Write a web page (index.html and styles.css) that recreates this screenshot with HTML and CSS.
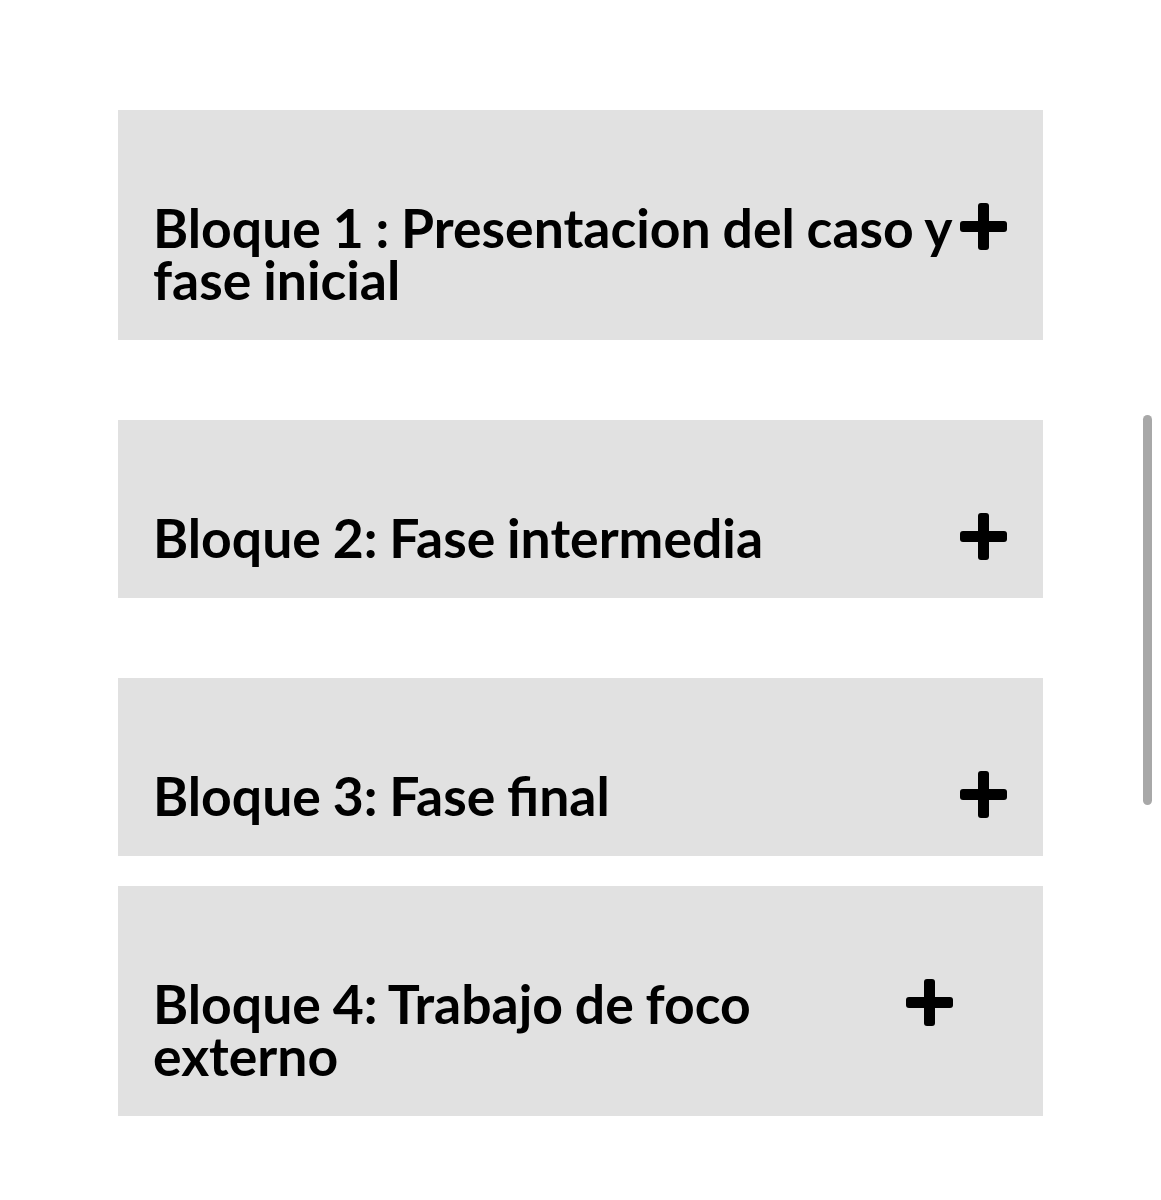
FILE: index.html
```html
<!DOCTYPE html>
<html lang="es">
<head>
    <meta charset="UTF-8">
    <meta name="viewport" content="width=device-width, initial-scale=1.0">
    <title>Bloques</title>
    <link rel="stylesheet" href="styles.css">
</head>
<body>
    <div class="accordion">
        <div class="block">
            <div class="block-head">
                <h2 class="block-title">Bloque 1 : Presentacion del caso y fase inicial</h2>
                <svg class="plus" viewBox="0 0 47 47"><rect x="0" y="18" width="47" height="11" rx="3"/><rect x="18" y="0" width="11" height="47" rx="3"/></svg>
            </div>
        </div>
        <div class="block">
            <div class="block-head">
                <h2 class="block-title">Bloque 2: Fase intermedia</h2>
                <svg class="plus" viewBox="0 0 47 47"><rect x="0" y="18" width="47" height="11" rx="3"/><rect x="18" y="0" width="11" height="47" rx="3"/></svg>
            </div>
        </div>
        <div class="block block-close">
            <div class="block-head">
                <h2 class="block-title">Bloque 3: Fase final</h2>
                <svg class="plus" viewBox="0 0 47 47"><rect x="0" y="18" width="47" height="11" rx="3"/><rect x="18" y="0" width="11" height="47" rx="3"/></svg>
            </div>
        </div>
        <div class="block">
            <div class="block-head block-head-narrow">
                <h2 class="block-title">Bloque 4: Trabajo de foco externo</h2>
                <svg class="plus" viewBox="0 0 47 47"><rect x="0" y="18" width="47" height="11" rx="3"/><rect x="18" y="0" width="11" height="47" rx="3"/></svg>
            </div>
        </div>
    </div>
    <div class="scrollbar"></div>
</body>
</html>
```

FILE: styles.css
```css
body {
    margin: 0;
    background: #fff;
    font-family: Lato, "Noto Sans", sans-serif;
    color: #000;
}
.accordion {
    width: 925px;
    margin-left: 118px;
    padding-top: 110px;
}
.block {
    background-color: #e1e1e1;
    margin-bottom: 80px;
}
.block-close {
    margin-bottom: 30px;
}
.block-head {
    display: flex;
    align-items: flex-start;
    padding: 91px 36px 35px 35px;
}
.block-head-narrow {
    padding-right: 90px;
}
.block-title {
    flex: 1;
    margin: 0;
    font-size: 53.5px;
    font-weight: 700;
    line-height: 52px;
    word-spacing: -1.2px;
}
.plus {
    flex-shrink: 0;
    width: 47px;
    height: 47px;
    margin-top: 2px;
    fill: #000;
}
.scrollbar {
    position: absolute;
    top: 415px;
    left: 1143px;
    width: 9px;
    height: 390px;
    border-radius: 5px;
    background-color: #a8a8a8;
}
```
